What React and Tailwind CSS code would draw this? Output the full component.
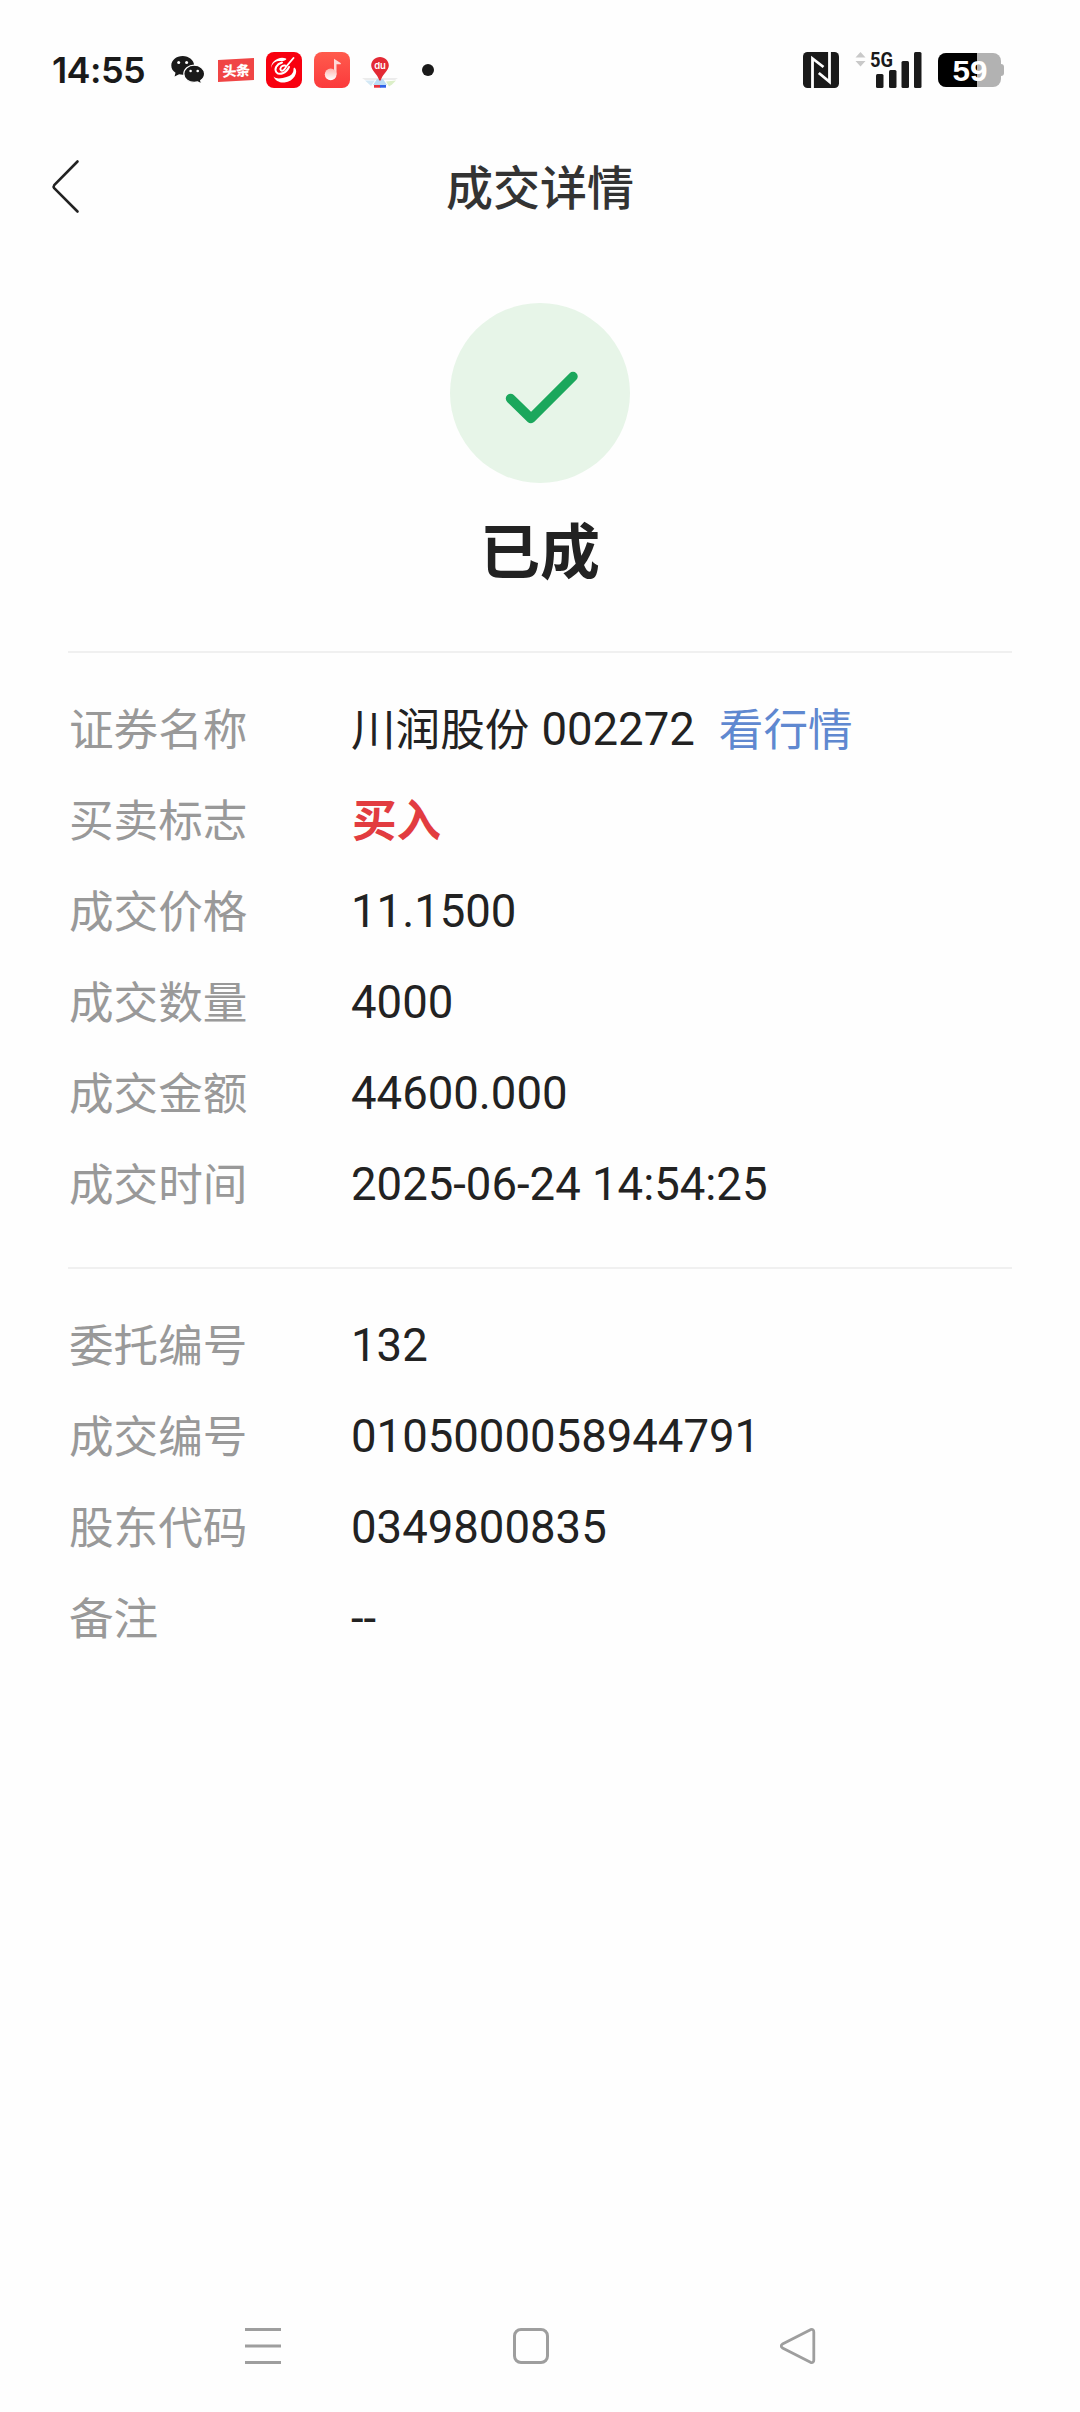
import React from 'react'

const tradeRows = [
  { label: '证券名称', name: '川润股份', value: '002272', link: '看行情' },
  { label: '买卖标志', side: '买入' },
  { label: '成交价格', value: '11.1500' },
  { label: '成交数量', value: '4000' },
  { label: '成交金额', value: '44600.000' },
  { label: '成交时间', value: '2025-06-24 14:54:25' },
]

const orderRows = [
  { label: '委托编号', value: '132' },
  { label: '成交编号', value: '0105000058944791' },
  { label: '股东代码', value: '0349800835' },
  { label: '备注', value: '--' },
]

function WechatIcon() {
  return (
    <svg className="w-[36px] h-[36px]" viewBox="0 0 36 36">
      <path
        d="M12.7 4C6.400 4 1.300 8.200 1.300 13.500c0 3 1.600 5.600 4.200 7.300L4.600 24.600l4.500-2.300c1.200.3 2.400.500 3.600.500 6.300 0 11.400-4.100 11.400-9.300S19 4 12.700 4z"
        fill="#1a1a1a"
      />
      <path
        d="M24.200 13.200c-5.800 0-10.400 3.800-10.400 8.600s4.600 8.600 10.400 8.600c1.200 0 2.300-.2 3.400-.5l4 2.100-.9-3.500c2.400-1.600 3.900-4 3.900-6.700 0-4.800-4.700-8.600-10.400-8.600z"
        fill="#1a1a1a"
        stroke="#fff"
        strokeWidth="1.200"
      />
      <circle cx="8.700" cy="10.600" r="1.500" fill="#fff" />
      <circle cx="16.600" cy="10.600" r="1.500" fill="#fff" />
      <circle cx="20.600" cy="19" r="1.300" fill="#fff" />
      <circle cx="27.700" cy="19" r="1.300" fill="#fff" />
    </svg>
  )
}

function ToutiaoIcon() {
  return (
    <div className="w-[36px] h-[22px] -skew-y-3 bg-[#f04545] flex items-center justify-center">
      <span className="-mt-px text-[14px] leading-none font-black tracking-[-0.5px] text-white">头条</span>
    </div>
  )
}

function SwirlIcon() {
  return (
    <svg className="w-[36px] h-[36px]" viewBox="0 0 36 36">
      <rect width="36" height="36" rx="8" fill="#f8000f" />
      <path d="M20 6.500C13 3.500 4.500 9.500 5 16.500c.3-3.500 3-6.500 6-7.300 3-.7 5 .3 7.500-.7 1.500-.5 2.300-1.300 1.500-2z" fill="#fff" />
      <path d="M7.500 24.500c4 3.500 9 1.300 13 .5 4-1 7-3.500 7-7.500 0-1.500.5-2.200 1.500-1.500 3.500 4-1 13.500-10.500 14.500-5 .5-9.500-2-11-6z" fill="#fff" />
      <g fill="none" stroke="#fff" strokeLinecap="round">
        <path d="M16 10.500c-5.500 1.500-8 6.500-5.500 9.800 2.800 3.200 9.500 1.200 12.500-5.300" strokeWidth="2" />
        <path d="M19 13.500c-3.500-.5-5.500 3-4.200 4.700 1.700 1.500 4.200-1 5.700-4L27.500 6" strokeWidth="1.900" />
      </g>
    </svg>
  )
}

function MusicIcon() {
  return (
    <svg className="w-[36px] h-[36px]" viewBox="0 0 36 36">
      <defs>
        <linearGradient id="musicBg" x1="0" y1="0" x2="0" y2="1">
          <stop offset="0" stopColor="#ff5b4d" />
          <stop offset="1" stopColor="#fb3a3c" />
        </linearGradient>
        <linearGradient id="noteFill" x1="0" y1="0" x2="0" y2="1">
          <stop offset="0" stopColor="#ffb3ad" />
          <stop offset="1" stopColor="#fff" />
        </linearGradient>
      </defs>
      <rect width="36" height="36" rx="8" fill="url(#musicBg)" />
      <path d="M20 6.800l6.600 4.200c.5.400.3 1.300-.4 1.300h-3.700V22h-2.500z" fill="#ffd9d6" />
      <circle cx="16.700" cy="22.300" r="5.900" fill="url(#noteFill)" />
    </svg>
  )
}

function BaiduMapIcon() {
  return (
    <svg className="w-[36px] h-[36px]" viewBox="0 0 36 36">
      <path d="M0 26h36l-3 2H3z" fill="#ececec" />
      <path d="M3 28.500h10l-4 5.500z" fill="#d3e8f5" />
      <path d="M24 29.500l10-1-4 4-3 2z" fill="#dcefc8" />
      <path d="M15 27h6l4 6H11z" fill="#b9dcf5" />
      <rect x="12" y="33" width="6.500" height="2.700" fill="#e8333d" />
      <rect x="18" y="33" width="6" height="2.700" fill="#2f62e8" />
      <path d="M18 5c-4.900 0-8.800 3.800-8.800 8.600 0 5.200 6.300 8.400 8.100 15h1.400c1.800-6.600 8.100-9.800 8.100-15C26.800 8.800 22.900 5 18 5z" fill="#e32a35" />
      <text x="18" y="17.200" textAnchor="middle" fontSize="9.500" fontWeight="600" fontFamily="Inter, sans-serif" fill="#fff">
        du
      </text>
    </svg>
  )
}

function NfcIcon() {
  return (
    <svg className="w-[36px] h-[36px]" viewBox="0 0 36 36">
      <rect width="36" height="36" rx="4.500" fill="#1a1a1a" />
      <path d="M9.500 36V6.500l11 8.500" fill="none" stroke="#fff" strokeWidth="2.800" />
      <path d="M26.500 0v29.800L15.800 21" fill="none" stroke="#fff" strokeWidth="2.800" />
    </svg>
  )
}

function SignalIcon() {
  return (
    <svg className="w-[68px] h-[38px] overflow-visible" viewBox="0 0 68 38">
      <path d="M5.500 1l5 5.500H.5zM5.500 15.500l5-5.500H.5z" fill="#c9c9c9" />
      <text x="15" y="15.800" fontSize="20" fontWeight="700" fontFamily="Roboto, sans-serif" textLength="23" lengthAdjust="spacingAndGlyphs" fill="#1a1a1a">
        5G
      </text>
      <g fill="#1a1a1a">
        <rect x="21" y="23" width="7.500" height="14" rx="1.500" />
        <rect x="34" y="19" width="7.500" height="18" rx="1.500" />
        <rect x="46.500" y="10" width="7.500" height="27" rx="1.500" />
        <rect x="59" y="1" width="7.500" height="36" rx="1.500" />
      </g>
    </svg>
  )
}

function BatteryIcon() {
  return (
    <svg className="w-[66px] h-[34px]" viewBox="0 0 66 34">
      <defs>
        <clipPath id="batteryBody">
          <rect width="63" height="34" rx="8" />
        </clipPath>
      </defs>
      <rect x="58" y="11" width="8" height="12" rx="3" fill="#b2b2b2" />
      <g clipPath="url(#batteryBody)">
        <rect width="63" height="34" fill="#b2b2b2" />
        <rect width="39" height="34" fill="#000" />
      </g>
      <text x="32" y="27.500" textAnchor="middle" fontSize="30" fontWeight="700" fontFamily="Liberation Sans, sans-serif" textLength="35" lengthAdjust="spacingAndGlyphs" fill="#fff">
        59
      </text>
    </svg>
  )
}

function StatusBar() {
  return (
    <div className="h-[140px] pl-[52px] pr-[76px] flex items-center justify-between">
      <div className="flex items-center h-[36px]">
        <span className="w-[118px] font-[Inter] text-[36px] leading-none font-semibold tracking-[-0.6px] text-[#1a1a1a]">14:55</span>
        <div className="flex items-center gap-3">
          <WechatIcon />
          <ToutiaoIcon />
          <SwirlIcon />
          <MusicIcon />
          <BaiduMapIcon />
        </div>
        <span className="ml-6 size-3 rounded-full bg-[#1a1a1a]"></span>
      </div>
      <div className="flex items-center">
        <NfcIcon />
        <div className="ml-4 mr-[15px]">
          <SignalIcon />
        </div>
        <BatteryIcon />
      </div>
    </div>
  )
}

function Header() {
  return (
    <header className="h-[94px] px-[50px] grid grid-cols-[1fr_auto_1fr] items-center">
      <svg className="w-[30px] h-[56px]" viewBox="0 0 30 56" fill="none" stroke="#222" strokeWidth="2.600" strokeLinecap="round" strokeLinejoin="round">
        <path d="M27.500 2.500L4.200 26.200q-1.200 1.500 0 3L27.500 52.500" />
      </svg>
      <h1 className="pb-[6px] text-[47px] leading-none font-medium text-[#333]">成交详情</h1>
    </header>
  )
}

function Row({ label, name, value, side, link }) {
  return (
    <div className="h-[91px] flex items-center text-[44.600px] leading-none whitespace-pre">
      <div className="w-[283px] pl-px pb-[4px] text-[#999]">{label}</div>
      {name && <span className="pb-[4px] text-[#222] mr-[12px]">{name}</span>}
      {value && <span className="pt-px font-[Roboto] text-[45.500px] text-[#222]">{value}</span>}
      {side && <span className="pl-px pb-[4px] font-bold text-[#e23c40]">{side}</span>}
      {link && <a className="ml-[24px] pb-[4px] text-[#5f88d0]">{link}</a>}
    </div>
  )
}

function NavBar() {
  return (
    <nav className="mt-auto h-[132px] pl-[245px] pr-[264px] flex items-center justify-between text-[#9e9e9e]">
      <svg className="w-[36px] h-[36px]" viewBox="0 0 36 36" stroke="currentColor" strokeWidth="3">
        <path d="M0 1.500h36M0 18h36M0 34.500h36" />
      </svg>
      <div className="size-9 rounded-[8px] border-3 border-current"></div>
      <svg className="w-[36px] h-[36px]" viewBox="0 0 36 36" fill="none" stroke="currentColor" strokeWidth="2.800" strokeLinejoin="round">
        <path d="M30.500 1.700L2.500 16q-2.500 2 0 4l28 14.300q3.300 1 3.300-2.300V4q0-3.300-3.300-2.300z" />
      </svg>
    </nav>
  )
}

export default function App() {
  return (
    <div className="w-[1080px] h-[2412px] flex flex-col bg-[#fefefe] font-['Noto_Sans_CJK_SC',sans-serif]">
      <StatusBar />
      <Header />

      <div className="mt-[69px] flex flex-col items-center">
        <div className="size-[180px] rounded-full bg-[#e7f5e8] flex items-center justify-center">
          <svg className="w-[180px] h-[180px]" viewBox="0 0 180 180" fill="none" stroke="#1ba75c" strokeWidth="9.500" strokeLinecap="round" strokeLinejoin="round">
            <path d="M60.500 95.500L81 115.500L123 73.500" />
          </svg>
        </div>
        <div className="mt-[35px] text-[60px] leading-[60px] font-bold text-[#222]">已成</div>
      </div>

      <main className="mt-[73px] mx-[68px]">
        <section className="border-t-2 border-[#f0f0f0] pt-[31px] h-[616px]">
          {tradeRows.map((row) => (
            <Row key={row.label} {...row} />
          ))}
        </section>
        <section className="border-t-2 border-[#f0f0f0] pt-[31px]">
          {orderRows.map((row) => (
            <Row key={row.label} {...row} />
          ))}
        </section>
      </main>

      <NavBar />
    </div>
  )
}
